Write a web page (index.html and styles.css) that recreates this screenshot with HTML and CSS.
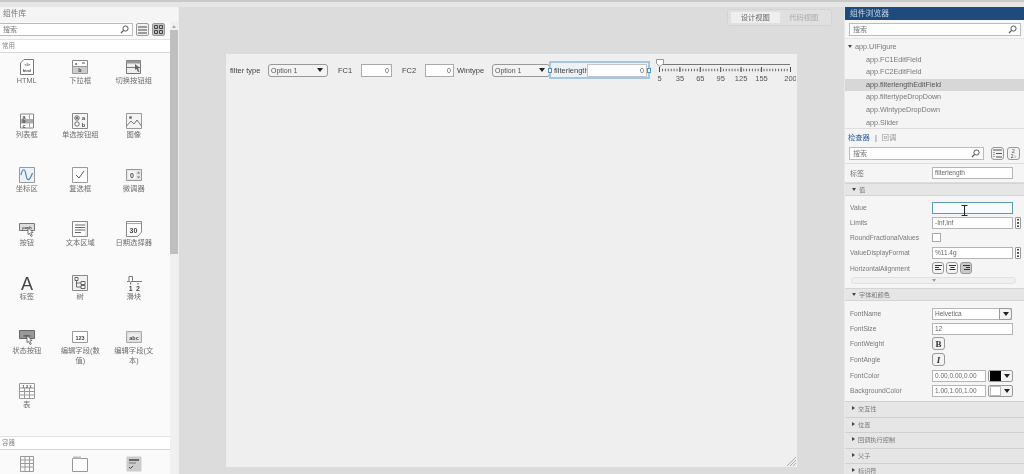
FILE: index.html
```html
<!DOCTYPE html>
<html lang="zh">
<head>
  <meta charset="UTF-8">
  <title>App Designer</title>
  <link rel="stylesheet" href="styles.css">
</head>
<body>
  <div class="topbar"></div>
  <div class="main">

    <!-- 组件库 -->
    <aside class="library">
      <div class="lib-title">组件库</div>
      <div class="lib-body">
        <div class="lib-content">
          <div class="lib-search">
            <div class="search-box">搜索
              <svg class="lens" width="9" height="9" viewBox="0 0 9 9"><circle cx="5.5" cy="3.5" r="2.6" fill="none" stroke="#555"/><path d="M3.6 5.4 1 8" stroke="#555" stroke-width="1.2"/></svg>
            </div>
            <div class="view-btn">
              <svg width="9" height="8" viewBox="0 0 9 8"><path d="M0 1h9M0 4h9M0 7h9" stroke="#444"/></svg>
            </div>
            <div class="view-btn on">
              <svg width="9" height="9" viewBox="0 0 9 9"><path d="M.5.5h3v3h-3zM5.500.5h3v3h-3zM.5 5.500h3v3h-3zM5.500 5.500h3v3h-3z" fill="none" stroke="#444"/></svg>
            </div>
          </div>
          <div class="lib-section">常用</div>
          <div class="palette">
            <div class="comp">
              <svg width="16" height="16" viewBox="0 0 16 16"><path d="M1.500 4 5 .5h9.500v15h-13z" fill="#fff" stroke="#777"/><text x="8.500" y="7" class="ico-t">&lt;/&gt;</text><text x="8" y="13" class="ico-t">html</text></svg>
              <span>HTML</span>
            </div>
            <div class="comp">
              <svg width="16" height="16" viewBox="0 0 16 16"><path d="M.5 1.500h15v6h-15z" fill="#fff" stroke="#888"/><path d="M.5 7.500h15v7h-15z" fill="#ccc" stroke="#999"/><text x="4" y="6" class="ico-t">a</text><path d="M10 4h3" stroke="#555"/><text x="8" y="13" class="ico-t b">b</text></svg>
              <span>下拉框</span>
            </div>
            <div class="comp">
              <svg width="16" height="16" viewBox="0 0 16 16"><path d="M.5 1.500h14v13H.5z" fill="#eee" stroke="#777"/><path d="M.5 1.500h14v3H.5z" fill="#999"/><path d="M.5 8.500h14" stroke="#777"/><path d="M9 5l5 4-2 .5 1.500 3-1.500.5-1.500-3L9 11z" fill="#666"/></svg>
              <span>切换按钮组</span>
            </div>
            <div class="comp">
              <svg width="16" height="16" viewBox="0 0 16 16"><path d="M1.500 1h13v14h-13z" fill="#fff" stroke="#888"/><path d="M2 6h12v4.500H2z" fill="#aaa"/><path d="M10.500 1v14" stroke="#aaa"/><text x="5" y="5.500" class="ico-t b">a</text><text x="5" y="10" class="ico-t b">b</text><text x="5" y="14.500" class="ico-t b">c</text></svg>
              <span>列表框</span>
            </div>
            <div class="comp">
              <svg width="16" height="16" viewBox="0 0 16 16"><path d="M.5.500h15v15H.5z" fill="#f6f6f6" stroke="#888"/><circle cx="5" cy="5" r="2.200" fill="#fff" stroke="#666"/><circle cx="5" cy="5" r="1" fill="#444"/><circle cx="5" cy="11" r="2.200" fill="#fff" stroke="#666"/><text x="11.500" y="7" class="ico-t b">a</text><text x="11.500" y="13.500" class="ico-t b">b</text></svg>
              <span>单选按钮组</span>
            </div>
            <div class="comp">
              <svg width="16" height="16" viewBox="0 0 16 16"><path d="M.5.500h15v15H.5z" fill="#f4f4f4" stroke="#999"/><circle cx="4.500" cy="4.500" r="1.500" fill="#777"/><path d="M.5 13 5 8l3 3 3-4 4.500 6" fill="none" stroke="#777"/></svg>
              <span>图像</span>
            </div>
            <div class="comp">
              <svg width="16" height="16" viewBox="0 0 16 16"><path d="M.5.500h15v15H.5z" fill="#eef3f8" stroke="#999"/><path d="M2 8c1.500-7 4-7 5 0s3.500 6 6.500-2" fill="none" stroke="#4d86b5" stroke-width="1.200"/></svg>
              <span>坐标区</span>
            </div>
            <div class="comp">
              <svg width="16" height="16" viewBox="0 0 16 16"><path d="M.5.500h15v15H.5z" fill="#fff" stroke="#999"/><path d="M4 8l3 3 5-7" fill="none" stroke="#555"/></svg>
              <span>复选框</span>
            </div>
            <div class="comp">
              <svg width="16" height="16" viewBox="0 0 16 16"><path d="M.5 2.500h15v11H.5z" fill="#e6e6e6" stroke="#999"/><path d="M2.500 4.500h7v7h-7z" fill="#fff"/><text x="6" y="10.500" class="ico-t big">0</text><path d="M11 6.500l1.500-2 1.500 2zM11 9.500l1.500 2 1.500-2z" fill="#777"/></svg>
              <span>微调器</span>
            </div>
            <div class="comp">
              <svg width="16" height="16" viewBox="0 0 16 16"><path d="M.5 2.500h15v7H.5z" fill="#ddd" stroke="#777"/><text x="8" y="8" class="ico-t">push</text><path d="M9 6.500l5 5-2.200.3 1.500 3-1.300.7-1.500-3L9 13.500z" fill="#fff" stroke="#444" stroke-width=".7"/></svg>
              <span>按钮</span>
            </div>
            <div class="comp">
              <svg width="16" height="16" viewBox="0 0 16 16"><path d="M.5.500h15v15H.5z" fill="#fff" stroke="#888"/><path d="M3 4h10M3 6.500h10M3 9h10M3 11.500h6" stroke="#666"/><path d="M14 1v14" stroke="#ccc"/></svg>
              <span>文本区域</span>
            </div>
            <div class="comp">
              <svg width="16" height="16" viewBox="0 0 16 16"><path d="M.5.500h15V11l-4 4.500H.5z" fill="#fff" stroke="#888"/><path d="M1 2.500h14" stroke="#aaa"/><text x="7.500" y="11.500" class="ico-t big">30</text></svg>
              <span>日期选择器</span>
            </div>
            <div class="comp">
              <svg width="16" height="16" viewBox="0 0 16 16"><text x="8" y="15" class="ico-a">A</text></svg>
              <span>标签</span>
            </div>
            <div class="comp">
              <svg width="16" height="16" viewBox="0 0 16 16"><path d="M.5.500h15v15H.5z" fill="#f2f2f2" stroke="#888"/><path d="M3 2.500h3v3H3zM9 6.500h4v3H9zM9 10.500h4v3H9z" fill="#fff" stroke="#666"/><path d="M4.500 5.500V12H9M4.500 8H9" fill="none" stroke="#666"/></svg>
              <span>树</span>
            </div>
            <div class="comp">
              <svg width="16" height="16" viewBox="0 0 16 16"><path d="M1 6.500h15" stroke="#777"/><path d="M3 1.500h3.500v4L4.700 7.500 3 5.500z" fill="#fff" stroke="#777"/><path d="M4.700 8v1.500M12 8v1.500" stroke="#555"/><text x="4.700" y="15.500" class="ico-t big">1</text><text x="12" y="15.500" class="ico-t big">2</text></svg>
              <span>滑块</span>
            </div>
            <div class="comp">
              <svg width="16" height="16" viewBox="0 0 16 16"><path d="M.5 1.500h15v8H.5z" fill="#999" stroke="#666"/><text x="8" y="7.500" class="ico-t">mm</text><path d="M8 6.500l5 5-2.200.3 1.500 3-1.300.7-1.500-3L8 13.500z" fill="#fff" stroke="#444" stroke-width=".7"/></svg>
              <span>状态按钮</span>
            </div>
            <div class="comp">
              <svg width="16" height="16" viewBox="0 0 16 16"><path d="M.5 2.500h15v11H.5z" fill="#fff" stroke="#999"/><text x="8" y="10.500" class="ico-t b">123</text></svg>
              <span>编辑字段(数值)</span>
            </div>
            <div class="comp">
              <svg width="16" height="16" viewBox="0 0 16 16"><path d="M.5 2.500h15v11H.5z" fill="#ddd" stroke="#aaa"/><path d="M2.500 4.500h11v7h-11z" fill="#eee"/><text x="8" y="10.500" class="ico-t b">abc</text></svg>
              <span>编辑字段(文本)</span>
            </div>
            <div class="comp">
              <svg width="16" height="16" viewBox="0 0 16 16"><path d="M.5.500h15v15H.5z" fill="#fff" stroke="#999"/><path d="M.5 5h15M.5 8.500h15M.5 12h15M5.500 5v10.500M10.500 5v10.500" stroke="#999"/><text x="8" y="4.500" class="ico-t">1 2 3</text></svg>
              <span>表</span>
            </div>
          </div>
          <div class="lib-section second">容器</div>
          <div class="palette">
            <div class="comp">
              <svg width="16" height="16" viewBox="0 0 16 16"><path d="M1.500.500h13v15h-13zM1.500 4h13M1.500 7.500h13M1.500 11h13M6 .5v15M10.500.5v15" fill="none" stroke="#999"/></svg>
            </div>
            <div class="comp">
              <svg width="16" height="16" viewBox="0 0 16 16"><path d="M.5 2.500h15v13H.5z" fill="#fff" stroke="#999"/><path d="M1 .5h8v2H1z" fill="#bbb"/></svg>
            </div>
            <div class="comp">
              <svg width="16" height="16" viewBox="0 0 16 16"><path d="M.5.500h15v15H.5z" fill="#ccc"/><path d="M3 3h10v2H3z" fill="#666"/><path d="M3 7h7" stroke="#777"/><path d="M3 11l1.500 1.500L7 10" fill="none" stroke="#444"/></svg>
            </div>
          </div>
        </div>
        <div class="lib-scroll">
          <div class="scroll-up"></div>
          <div class="scroll-thumb"></div>
        </div>
      </div>
    </aside>

    <!-- 设计区 -->
    <section class="stage">
      <div class="view-switch">
        <div class="view-tab active">设计视图</div>
        <div class="view-tab">代码视图</div>
      </div>
      <div class="figure">
        <div class="figure-row">
          <label class="lbl w38">filter type</label>
          <div class="dropdown w60">Option 1<i class="caret"></i></div>
          <label class="lbl w23 ml10">FC1</label>
          <div class="num w31">0</div>
          <label class="lbl w23 ml10">FC2</label>
          <div class="num w29">0</div>
          <label class="lbl w35 ml3">Wintype</label>
          <div class="dropdown w58">Option 1<i class="caret"></i></div>
          <div class="selected">
            <label class="lbl w33">filterlength</label>
            <div class="num w60">0</div>
            <i class="handle left"></i>
            <i class="handle right"></i>
          </div>
          <svg class="slider" width="140" height="24" viewBox="656 58 140 24">
            <path d="M660 64.500h130" stroke="#777" stroke-width="1.200"/>
            <path d="M656.500 59.500h7v4l-3.500 3-3.500-3z" fill="#fff" stroke="#999"/>
            <path d="M659.500 67v5M679.900 67v5M700.300 67v5M720.700 67v5M741.100 67v5M761.500 67v5M790.500 67v5" stroke="#444"/>
            <path d="M662 70h126" stroke="#666" stroke-width="2.500" stroke-dasharray="1 1.900"/>
            <text x="659.500" y="81" class="tick">5</text>
            <text x="679.900" y="81" class="tick">35</text>
            <text x="700.300" y="81" class="tick">65</text>
            <text x="720.700" y="81" class="tick">95</text>
            <text x="741.100" y="81" class="tick">125</text>
            <text x="761.500" y="81" class="tick">155</text>
            <text x="790.500" y="81" class="tick">200</text>
          </svg>
        </div>
        <svg class="grip" width="9" height="9" viewBox="0 0 9 9"><path d="M9 0 0 9M9 3 3 9M9 6 6 9" stroke="#aaa"/></svg>
      </div>
    </section>

    <!-- 组件浏览器 + 检查器 -->
    <aside class="inspector">
      <div class="browser-title">组件浏览器</div>
      <div class="browser-search">
        <div class="search-box">搜索
          <svg class="lens" width="9" height="9" viewBox="0 0 9 9"><circle cx="5.5" cy="3.5" r="2.6" fill="none" stroke="#555"/><path d="M3.6 5.4 1 8" stroke="#555" stroke-width="1.2"/></svg>
        </div>
      </div>
      <ul class="tree">
        <li class="root"><i class="tri down"></i>app.UIFigure</li>
        <li>app.FC1EditField</li>
        <li>app.FC2EditField</li>
        <li class="current">app.filterlengthEditField</li>
        <li>app.filtertypeDropDown</li>
        <li>app.WintypeDropDown</li>
        <li>app.Slider</li>
      </ul>
      <div class="tabs"><b>检查器</b><em>|</em><span>回调</span></div>
      <div class="insp-search">
        <div class="search-box">搜索
          <svg class="lens" width="9" height="9" viewBox="0 0 9 9"><circle cx="5.5" cy="3.5" r="2.6" fill="none" stroke="#555"/><path d="M3.6 5.4 1 8" stroke="#555" stroke-width="1.2"/></svg>
        </div>
        <div class="sort-btn">
          <svg width="9" height="9" viewBox="0 0 9 9"><path d="M0 1h9M3 4.500h6M3 8h6" stroke="#555"/><path d="M1 3v5" stroke="#555" stroke-dasharray="1 1"/></svg>
        </div>
        <div class="sort-btn"><span class="az">2<br>2↓</span></div>
      </div>
      <div class="prop label-row"><span class="cjk">标签</span><div class="field">filterlength</div></div>

      <div class="sec-head"><i class="tri down"></i>值</div>
      <div class="sec-body">
        <div class="prop"><span>Value</span>
          <div class="field focus">
            <svg class="ibeam" width="7" height="11" viewBox="0 0 7 11"><path d="M.5.500h6M.5 10.500h6M3.500.5v10" fill="none" stroke="#222"/></svg>
          </div>
        </div>
        <div class="prop"><span>Limits</span><div class="field">-Inf,Inf</div><div class="more"></div></div>
        <div class="prop"><span>RoundFractionalValues</span><div class="check"></div></div>
        <div class="prop"><span>ValueDisplayFormat</span><div class="field">%11.4g</div><div class="more"></div></div>
        <div class="prop tall"><span>HorizontalAlignment</span>
          <div class="aligns">
            <div class="al-btn"><svg width="7" height="6" viewBox="0 0 7 6"><path d="M0 .5h7M0 2.500h4M0 4.500h6" stroke="#333"/></svg></div>
            <div class="al-btn"><svg width="7" height="6" viewBox="0 0 7 6"><path d="M0 .5h7M1.500 2.500h4M.5 4.500h6" stroke="#333"/></svg></div>
            <div class="al-btn on"><svg width="7" height="6" viewBox="0 0 7 6"><path d="M0 .5h7M3 2.500h4M1 4.500h6" stroke="#333"/></svg></div>
          </div>
        </div>
        <div class="collapse"><i class="tri down small"></i></div>
      </div>

      <div class="sec-head"><i class="tri down"></i>字体和颜色</div>
      <div class="sec-body font">
        <div class="prop"><span>FontName</span><div class="field combo">Helvetica<i class="drop"><i class="caret"></i></i></div></div>
        <div class="prop"><span>FontSize</span><div class="field">12</div></div>
        <div class="prop"><span>FontWeight</span><div class="style-btn bold">B</div></div>
        <div class="prop t16"><span>FontAngle</span><div class="style-btn ital">I</div></div>
        <div class="prop"><span>FontColor</span><div class="color-wrap"><div class="field">0.00,0.00,0.00</div><div class="swatch"><i class="black"></i><i class="caret"></i></div></div></div>
        <div class="prop"><span>BackgroundColor</span><div class="color-wrap"><div class="field">1.00,1.00,1.00</div><div class="swatch"><i class="white"></i><i class="caret"></i></div></div></div>
      </div>

      <div class="sec-head closed"><i class="tri right"></i>交互性</div>
      <div class="sec-head closed"><i class="tri right"></i>位置</div>
      <div class="sec-head closed"><i class="tri right"></i>回调执行控制</div>
      <div class="sec-head closed"><i class="tri right"></i>父子</div>
      <div class="sec-head closed"><i class="tri right"></i>标识符</div>
    </aside>
  </div>
</body>
</html>
```

FILE: styles.css
```css
/* Page */
* {
  box-sizing: border-box;
}

html, body {
  margin: 0;
  height: 474px;
  overflow: hidden;
}

body {
  width: 1024px;
  background: #dedede;
  color: #666;
  font-family: 'Liberation Sans', 'Noto Sans CJK SC', sans-serif;
  font-size: 8px;
  filter: blur(0.35px);
}

.topbar {
  height: 7px;
  background: #e6e6e6;
  border-top: 2px solid #c9c9c9;
}

.main {
  display: flex;
  height: 467px;
}

/* Component library */
.library {
  width: 179px;
  flex: none;
  background: #fafafa;
  border-right: 1px solid #eee;
}

.lib-title {
  height: 15px;
  padding: 1px 3px 0;
  color: #777;
  background: #f5f5f5;
  font-size: 7.700px;
  line-height: 12px;
}

.lib-body {
  display: flex;
  height: 452px;
}

.lib-content {
  width: 170px;
  flex: none;
  overflow: hidden;
}

.lib-search {
  display: flex;
  align-items: center;
  gap: 3px;
  height: 15px;
}

.search-box {
  position: relative;
  flex: 1;
  height: 13px;
  padding: 0 3px;
  background: #fff;
  border: 1px solid #bbb;
  color: #777;
  font-size: 7px;
  line-height: 11px;
}

.lens {
  position: absolute;
  right: 3px;
  top: 1px;
}

.lib-search .search-box {
  margin-left: -1px;
}

.view-btn {
  display: flex;
  align-items: center;
  justify-content: center;
  width: 13px;
  height: 13px;
  border: 1px solid #999;
  border-radius: 2px;
  background: #f2f2f2;
}

.view-btn:last-child {
  margin-right: 5px;
}

.view-btn.on {
  background: #c4c4c4;
}

.lib-section {
  height: 14px;
  margin-top: 2px;
  padding: 0 2px;
  background: #fff;
  border-top: 1px solid #e2e2e2;
  border-bottom: 1px solid #d6d6d6;
  color: #888;
  font-size: 6.500px;
  line-height: 11px;
}

.lib-section.second {
  margin-top: 0;
}

.palette {
  display: grid;
  grid-template-columns: repeat(3, 53.5px);
  grid-auto-rows: 54px;
  padding-top: 7px;
}

.palette + .lib-section {
  margin-top: -2px;
}

.comp {
  display: flex;
  flex-direction: column;
  align-items: center;
  text-align: center;
  font-size: 7.300px;
  line-height: 10px;
  color: #6d6d6d;
}

.comp svg {
  margin-top: -1px;
  margin-bottom: 1px;
  flex: none;
  overflow: visible;
}

.comp span {
  max-width: 43px;
}

.ico-t {
  font-size: 4px;
  font-weight: bold;
  text-anchor: middle;
  fill: #444;
}

.ico-t.b {
  font-size: 5.5px;
}

.ico-t.big {
  font-size: 7px;
}

.ico-a {
  font-size: 18px;
  text-anchor: middle;
  fill: #444;
}

.lib-scroll {
  width: 9px;
  background: #f0f0f0;
}

.scroll-up {
  height: 8px;
  position: relative;
}

.scroll-up::after {
  content: "";
  position: absolute;
  left: 2px;
  top: 3px;
  border: 2.5px solid transparent;
  border-top: 0;
  border-bottom: 3px solid #aaa;
}

.scroll-thumb {
  height: 224px;
  background: #bfbfbf;
}

/* Design area */
.stage {
  flex: 1;
  display: flex;
  flex-direction: column;
  background: #dcdcdc;
}

.view-switch {
  display: flex;
  align-self: flex-end;
  width: 105px;
  height: 17px;
  margin: 2px 12px 0 0;
  padding: 2px 3px;
  border: 1px solid #d4d4d4;
  border-radius: 2px;
  background: #e0e0e0;
}

.view-tab {
  flex: 1;
  text-align: center;
  font-size: 7.300px;
  line-height: 11px;
  color: #aaa;
}

.view-tab.active {
  background: #efefef;
  color: #666;
}

.figure {
  position: relative;
  width: 571px;
  height: 413px;
  margin: 28px 0 0 47px;
  padding: 4px 0 0 4px;
  background: #efefef;
}

.figure-row {
  display: flex;
  align-items: center;
  height: 24px;
}

.lbl {
  flex: none;
  color: #444;
  font-size: 7.500px;
  white-space: nowrap;
}

.w38 { width: 38px; }
.w23 { width: 23px; }
.w33 { width: 33px; }
.w35 { width: 35px; }
.w60 { width: 60px; }
.w58 { width: 58px; }
.w31 { width: 31px; }
.w29 { width: 29px; }
.ml10 { margin-left: 10px; }
.ml3 { margin-left: 3px; }

.dropdown {
  position: relative;
  flex: none;
  height: 13px;
  padding-left: 2px;
  background: #f3f3f3;
  border: 1px solid #999;
  border-radius: 3px;
  color: #555;
  font-size: 7px;
  line-height: 11px;
  white-space: nowrap;
}

.dropdown .caret {
  position: absolute;
  right: 4px;
  top: 3px;
}

.caret {
  display: inline-block;
  border: 3px solid transparent;
  border-top: 4px solid #222;
  border-bottom: 0;
}

.num {
  flex: none;
  height: 13px;
  padding-right: 2px;
  background: #fff;
  border: 1px solid #aaa;
  color: #555;
  font-size: 7px;
  line-height: 11px;
  text-align: right;
}

.selected {
  position: relative;
  display: flex;
  align-items: center;
  flex: none;
  width: 101px;
  height: 18px;
  margin-left: -1px;
  padding-left: 3px;
  border: 2px solid #a3c7e3;
  background: #edf1f4;
}

.selected .num {
  border-color: #c4c4c4;
}

.handle {
  position: absolute;
  top: 5px;
  width: 4px;
  height: 5px;
  background: #fff;
  border: 1px solid #4d93c9;
}

.handle.left { left: -3px; }
.handle.right { right: -3px; }

.slider {
  flex: none;
  margin-left: 6px;
}

.tick {
  font-size: 7.500px;
  text-anchor: middle;
  fill: #555;
}

.grip {
  position: absolute;
  right: 1px;
  bottom: 1px;
}

/* Component browser */
.inspector {
  width: 180px;
  flex: none;
  background: #f5f5f5;
  border-left: 1px solid #e8e8e8;
  overflow: hidden;
}

.browser-title {
  height: 13px;
  padding-left: 5px;
  background: #1f4a7c;
  color: #c9d6e6;
  font-size: 7.800px;
  line-height: 13px;
}

.browser-search {
  height: 18px;
  padding: 3px 3px 0 4px;
  background: #f7f7f7;
}

.tree {
  height: 90px;
  margin: 0;
  padding: 2px 0 0;
  list-style: none;
  background: #f4f4f4;
  border-top: 1px solid #e6e6e6;
}

.tree li {
  height: 12.600px;
  padding-left: 21px;
  color: #777;
  font-size: 7.200px;
  line-height: 12.600px;
  white-space: nowrap;
}

.tree li.root {
  padding-left: 3px;
}

.tree li.current {
  background: #d7d7d7;
  color: #555;
}

.tri {
  display: inline-block;
  margin-right: 3px;
  vertical-align: 1px;
  border: 2.500px solid transparent;
}

.tri.down {
  border-top: 3px solid #444;
  border-bottom: 0;
}

.tri.right {
  border-left: 3px solid #444;
  border-right: 0;
}

.tri.small {
  border-top-color: #999;
  margin: 0;
}

.tabs {
  display: flex;
  align-items: center;
  gap: 5px;
  height: 16px;
  padding: 1px 0 0 3px;
  border-top: 1px solid #ddd;
  font-size: 7.300px;
}

.tabs b {
  font-weight: normal;
  color: #2a5d94;
}

.tabs em {
  font-style: normal;
}

.tabs span {
  color: #999;
}

.insp-search {
  display: flex;
  align-items: center;
  gap: 3px;
  height: 20px;
  padding: 0 4px;
  border-bottom: 1px solid #ddd;
}

.insp-search .search-box {
  margin-right: 4px;
}

.sort-btn {
  display: flex;
  align-items: center;
  justify-content: center;
  width: 13px;
  height: 13px;
  background: #f2f2f2;
  border: 1px solid #999;
  border-radius: 3px;
}

.az {
  font-size: 5px;
  line-height: 5px;
  color: #444;
  text-align: center;
}

/* Property rows */
.prop {
  display: grid;
  grid-template-columns: 87px 81px auto;
  align-items: center;
  height: 15px;
}

.prop > span {
  padding-left: 5px;
  color: #777;
  font-size: 6.700px;
  white-space: nowrap;
}

.prop > span.cjk {
  font-size: 7px;
}

.label-row {
  height: 19px;
  border-bottom: 1px solid #ddd;
}

.prop.tall {
  height: 16px;
}

.prop.t16 {
  height: 17px;
}

.field {
  position: relative;
  height: 12px;
  padding-left: 2px;
  background: #fff;
  border: 1px solid #b5b5b5;
  color: #666;
  font-size: 6.500px;
  line-height: 10px;
  white-space: nowrap;
}

.field.focus {
  border-color: #5d9bb5;
  background: #f7fbfd;
}

.ibeam {
  position: absolute;
  left: 28px;
  top: 2px;
}

.more {
  width: 6px;
  height: 12px;
  margin-left: 2px;
  background: radial-gradient(circle, #444 .8px, transparent 1px) 0 0 / 4px 3.300px #fff;
  border: 1px solid #999;
  border-radius: 1px;
}

.check {
  width: 9px;
  height: 9px;
  background: #fff;
  border: 1px solid #aaa;
}

.aligns {
  display: flex;
  gap: 2px;
}

.al-btn {
  display: flex;
  align-items: center;
  justify-content: center;
  width: 12px;
  height: 12px;
  background: #f3f3f3;
  border: 1px solid #999;
  border-radius: 3px;
}

.al-btn.on {
  background: #c9c9c9;
}

.collapse {
  display: flex;
  align-items: center;
  justify-content: center;
  width: 165px;
  height: 7px;
  margin: 1px 0 4px 6px;
  background: #f0f0f0;
  border: 1px solid #e0e0e0;
  border-radius: 4px;
}

.sec-head {
  height: 13px;
  padding-left: 7px;
  background: #e6e6e6;
  border-top: 1px solid #d4d4d4;
  border-bottom: 1px solid #d4d4d4;
  color: #777;
  font-size: 6.200px;
  line-height: 11px;
}

.sec-head.closed {
  height: 15.600px;
  border-top: 1px solid #d0d0d0;
  border-bottom: 0;
  line-height: 14px;
}

.sec-head .tri {
  margin-right: 3px;
}

.sec-body {
  padding-top: 4px;
}

.sec-body.font {
  padding: 5px 0 3px;
}

.combo {
  width: 80px;
}

.drop {
  position: absolute;
  right: -1px;
  top: -1px;
  display: flex;
  align-items: center;
  justify-content: center;
  width: 13px;
  height: 12px;
  background: #f3f3f3;
  border: 1px solid #999;
  border-radius: 0 3px 3px 0;
}

.style-btn {
  display: flex;
  align-items: center;
  justify-content: center;
  width: 13px;
  height: 13px;
  background: #f3f3f3;
  border: 1px solid #999;
  border-radius: 3px;
  color: #333;
  font-family: 'Liberation Serif', serif;
  font-size: 9px;
  font-weight: bold;
}

.style-btn.ital {
  font-style: italic;
}

.color-wrap {
  display: flex;
  gap: 2px;
  width: 81px;
}

.color-wrap .field {
  width: 54px;
}

.swatch {
  display: flex;
  align-items: center;
  gap: 3px;
  width: 25px;
  height: 12px;
  padding-left: 1px;
  background: #f3f3f3;
  border: 1px solid #999;
  border-radius: 2px;
}

.swatch i:first-child {
  width: 11px;
  height: 10px;
}

.swatch .black {
  background: #000;
}

.swatch .white {
  background: #fff;
  border: 1px solid #bbb;
}
```
